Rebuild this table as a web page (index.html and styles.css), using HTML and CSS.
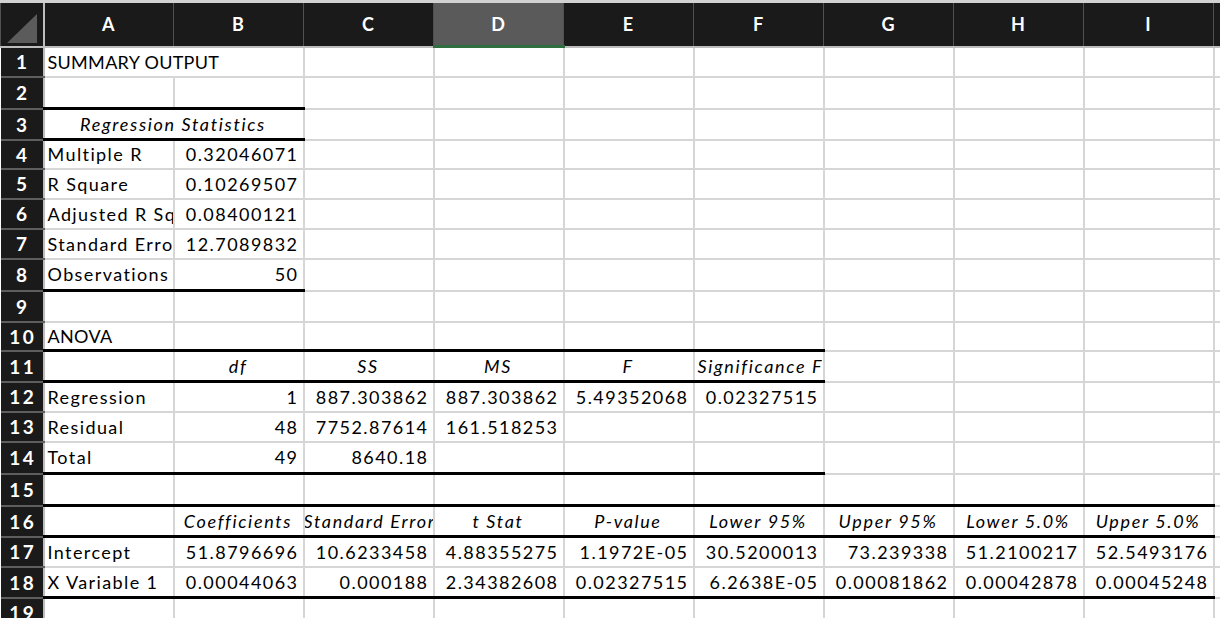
FILE: index.html
```html
<!DOCTYPE html>
<html>
<head>
<meta charset="utf-8">
<link rel="stylesheet" href="styles.css">
</head>
<body>
<div class="topbar"></div>
<table class="sheet">
  <colgroup>
    <col class="c-rh">
    <col class="c"><col class="c"><col class="c"><col class="c"><col class="c"><col class="c"><col class="c"><col class="c"><col class="c">
    <col class="c">
  </colgroup>
  <thead>
    <tr class="hdr">
      <th class="corner"><span class="tri"></span></th>
      <th>A</th><th>B</th><th>C</th><th class="sel">D</th><th>E</th><th>F</th><th>G</th><th>H</th><th>I</th><th></th>
    </tr>
  </thead>
  <tbody>
    <tr class="r30">
      <th class="rh">1</th>
      <td class="ovf caps" colspan="2">SUMMARY OUTPUT</td><td></td><td></td><td></td><td></td><td></td><td></td><td></td><td></td>
    </tr>
    <tr class="r32">
      <th class="rh">2</th>
      <td class="tb"></td><td class="tb"></td><td></td><td></td><td></td><td></td><td></td><td></td><td></td><td></td>
    </tr>
    <tr class="r31">
      <th class="rh">3</th>
      <td class="tb it ctr" colspan="2">Regression Statistics</td><td></td><td></td><td></td><td></td><td></td><td></td><td></td><td></td>
    </tr>
    <tr class="r29">
      <th class="rh">4</th>
      <td>Multiple R</td><td class="num">0.32046071</td><td></td><td></td><td></td><td></td><td></td><td></td><td></td><td></td>
    </tr>
    <tr class="r30">
      <th class="rh">5</th>
      <td>R Square</td><td class="num">0.10269507</td><td></td><td></td><td></td><td></td><td></td><td></td><td></td><td></td>
    </tr>
    <tr class="r30">
      <th class="rh">6</th>
      <td>Adjusted R Square</td><td class="num">0.08400121</td><td></td><td></td><td></td><td></td><td></td><td></td><td></td><td></td>
    </tr>
    <tr class="r30">
      <th class="rh">7</th>
      <td>Standard Error</td><td class="num">12.7089832</td><td></td><td></td><td></td><td></td><td></td><td></td><td></td><td></td>
    </tr>
    <tr class="r32">
      <th class="rh">8</th>
      <td class="tb">Observations</td><td class="tb num">50</td><td></td><td></td><td></td><td></td><td></td><td></td><td></td><td></td>
    </tr>
    <tr class="r31">
      <th class="rh">9</th>
      <td></td><td></td><td></td><td></td><td></td><td></td><td></td><td></td><td></td><td></td>
    </tr>
    <tr class="r29">
      <th class="rh">10</th>
      <td class="tb caps">ANOVA</td><td class="tb"></td><td class="tb"></td><td class="tb"></td><td class="tb"></td><td class="tb"></td><td></td><td></td><td></td><td></td>
    </tr>
    <tr class="r31">
      <th class="rh">11</th>
      <td class="tb"></td><td class="tb it ctr">df</td><td class="tb it ctr">SS</td><td class="tb it ctr">MS</td><td class="tb it ctr">F</td><td class="tb it ctr">Significance F</td><td></td><td></td><td></td><td></td>
    </tr>
    <tr class="r30">
      <th class="rh">12</th>
      <td>Regression</td><td class="num">1</td><td class="num">887.303862</td><td class="num">887.303862</td><td class="num">5.49352068</td><td class="num">0.02327515</td><td></td><td></td><td></td><td></td>
    </tr>
    <tr class="r30">
      <th class="rh">13</th>
      <td>Residual</td><td class="num">48</td><td class="num">7752.87614</td><td class="num">161.518253</td><td></td><td></td><td></td><td></td><td></td><td></td>
    </tr>
    <tr class="r32">
      <th class="rh">14</th>
      <td class="tb">Total</td><td class="tb num">49</td><td class="tb num">8640.18</td><td class="tb"></td><td class="tb"></td><td class="tb"></td><td></td><td></td><td></td><td></td>
    </tr>
    <tr class="r32">
      <th class="rh">15</th>
      <td class="tb"></td><td class="tb"></td><td class="tb"></td><td class="tb"></td><td class="tb"></td><td class="tb"></td><td class="tb"></td><td class="tb"></td><td class="tb"></td><td></td>
    </tr>
    <tr class="r31">
      <th class="rh">16</th>
      <td class="tb"></td><td class="tb it ctr">Coefficients</td><td class="tb it ctr clipc"><span>Standard Error</span></td><td class="tb it ctr">t Stat</td><td class="tb it ctr">P-value</td><td class="tb it ctr">Lower 95%</td><td class="tb it ctr">Upper 95%</td><td class="tb it ctr">Lower 5.0%</td><td class="tb it ctr">Upper 5.0%</td><td></td>
    </tr>
    <tr class="r30">
      <th class="rh">17</th>
      <td>Intercept</td><td class="num">51.8796696</td><td class="num">10.6233458</td><td class="num">4.88355275</td><td class="num">1.1972E-05</td><td class="num">30.5200013</td><td class="num">73.239338</td><td class="num">51.2100217</td><td class="num">52.5493176</td><td></td>
    </tr>
    <tr class="r31">
      <th class="rh">18</th>
      <td class="tb">X Variable 1</td><td class="tb num">0.00044063</td><td class="tb num">0.000188</td><td class="tb num">2.34382608</td><td class="tb num">0.02327515</td><td class="tb num">6.2638E-05</td><td class="tb num">0.00081862</td><td class="tb num">0.00042878</td><td class="tb num">0.00045248</td><td></td>
    </tr>
    <tr class="r30">
      <th class="rh">19</th>
      <td></td><td></td><td></td><td></td><td></td><td></td><td></td><td></td><td></td><td></td>
    </tr>
  </tbody>
</table>
</body>
</html>
```

FILE: styles.css
```css
html, body {
  margin: 0;
  padding: 0;
  background: #ffffff;
  overflow: hidden;
  width: 1220px;
  height: 618px;
}

.topbar {
  height: 3px;
  background: #d2d2d2;
}

.sheet {
  border-collapse: collapse;
  table-layout: fixed;
  width: 1343px;
  font-family: "Lato", "Open Sans", sans-serif;
  font-size: 18px;
  color: #000000;
}

.c-rh { width: 43px; }
.c { width: 130px; }

.hdr th {
  height: 42px;
  background: #1a1a1a;
  color: #ffffff;
  font-weight: 700;
  font-size: 18px;
  letter-spacing: 1px;
  text-align: center;
  padding: 0;
  border-left: 1px solid #505050;
  border-right: 1px solid #505050;
  border-bottom: 2px solid #bdbdbd;
}

.hdr th.sel {
  background: #5a5a5a;
  border-bottom: 3px solid #2e6e3f;
}

.hdr th.corner {
  position: relative;
  border-right: 2px solid #bdbdbd;
}

.tri {
  position: absolute;
  right: 6px;
  bottom: 3px;
  width: 0;
  height: 0;
  border-left: 30px solid transparent;
  border-bottom: 29px solid #5b5b5b;
}

.rh {
  background: #1a1a1a;
  color: #ffffff;
  font-weight: 700;
  font-size: 19px;
  letter-spacing: 2.5px;
  text-indent: 2.5px;
  text-align: center;
  padding: 0;
  border-top: 2px solid #5e5e5e;
  border-bottom: 2px solid #5e5e5e;
  border-right: 2px solid #bdbdbd;
}

.r29 { height: 29px; }
.r30 { height: 30px; }
.r31 { height: 31px; }
.r32 { height: 32px; }

td {
  padding: 0 4px 0 3px;
  border: 2px solid #d6d6d6;
  white-space: nowrap;
  overflow: hidden;
  text-overflow: clip;
  vertical-align: middle;
  line-height: 20px;
  letter-spacing: 1.4px;
}

td.ovf { overflow: visible; }

td.caps { letter-spacing: 0.3px; }

td.tb { border-bottom: 3px solid #000000; }

td.it {
  font-style: italic;
  letter-spacing: 1.65px;
}

td.ctr { text-align: center; }

td.num {
  text-align: right;
  letter-spacing: 1.45px;
}

td.clipc {
  text-align: center;
  padding: 0;
}

td.clipc span {
  display: block;
  width: 170px;
  margin-left: -20px;
}
```
